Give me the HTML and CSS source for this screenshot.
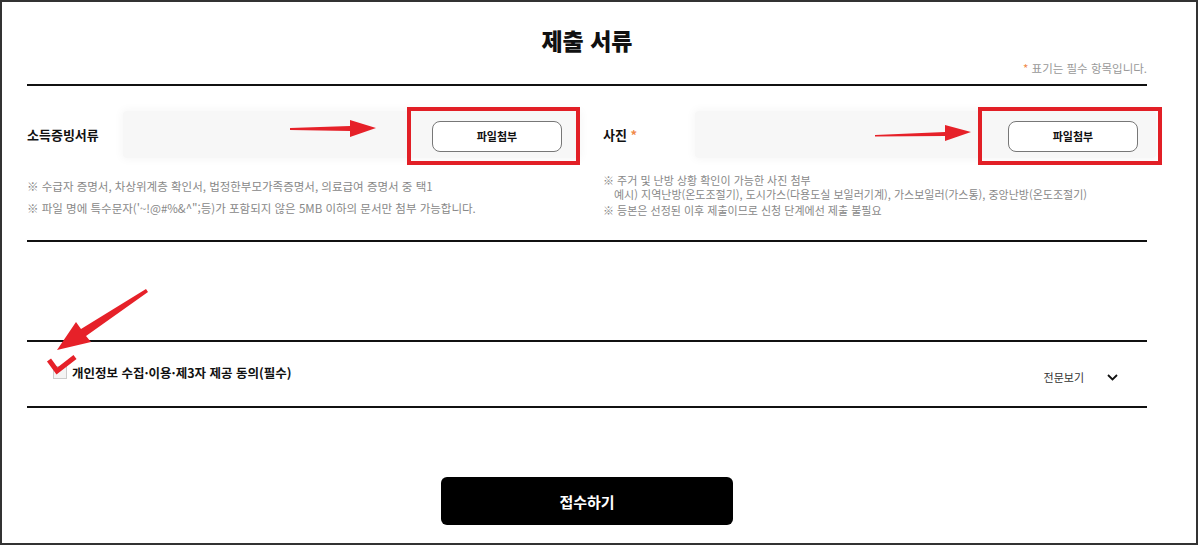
FILE: index.html
```html
<!DOCTYPE html>
<html lang="ko">
<head>
    <meta charset="UTF-8">
    <meta name="viewport" content="width=device-width, initial-scale=1.0">
    <title>제출 서류</title>
    <link rel="stylesheet" href="styles.css">
</head>
<body>
    <div class="frame">
        <div class="content">
            <div class="head">
                <h2 class="title">제출 서류</h2>
                <p class="req-note"><span class="star">*</span> 표기는 필수 항목입니다.</p>
            </div>

            <div class="docs">
                <div class="doc-col">
                    <div class="doc-row">
                        <span class="doc-label">소득증빙서류</span>
                        <div class="file-box">
                            <button class="file-btn">파일첨부</button>
                        </div>
                    </div>
                    <ul class="notes notes-left">
                        <li>※ 수급자 증명서, 차상위계층 확인서, 법정한부모가족증명서, 의료급여 증명서 중 택1</li>
                        <li>※ 파일 명에 특수문자('~!@#%&amp;^";등)가 포함되지 않은 5MB 이하의 문서만 첨부 가능합니다.</li>
                    </ul>
                </div>
                <div class="doc-col">
                    <div class="doc-row">
                        <span class="doc-label doc-label-short">사진 <span class="star">*</span></span>
                        <div class="file-box">
                            <button class="file-btn">파일첨부</button>
                        </div>
                    </div>
                    <ul class="notes notes-right">
                        <li>※ 주거 및 난방 상황 확인이 가능한 사진 첨부
                            <span class="note-sub">예시) 지역난방(온도조절기), 도시가스(다용도실 보일러기계), 가스보일러(가스통), 중앙난방(온도조절기)</span>
                        </li>
                        <li>※ 등본은 선정된 이후 제출이므로 신청 단계에선 제출 불필요</li>
                    </ul>
                </div>
            </div>

            <div class="agree">
                <label class="agree-check">
                    <span class="chk"></span>
                    개인정보 수집·이용·제3자 제공 동의(필수)
                </label>
                <div class="view-all">
                    전문보기
                    <svg class="chevron" width="11" height="7" viewBox="0 0 11 7">
                        <path d="M1 1 L5.5 5.5 L10 1" fill="none" stroke="#111" stroke-width="1.8"/>
                    </svg>
                </div>
            </div>

            <div class="submit-wrap">
                <button class="submit-btn">접수하기</button>
            </div>
        </div>

        <!-- red annotation marks drawn over the form -->
        <svg class="marks" width="1200" height="545" viewBox="0 0 1200 545">
            <rect x="409" y="109" width="169" height="54" fill="none" stroke="#e21f26" stroke-width="4"/>
            <rect x="980" y="109" width="180" height="54" fill="none" stroke="#e21f26" stroke-width="4"/>
            <polygon points="290,128 350,126 350,120 376,128 350,137 350,131 290,130" fill="#e62129"/>
            <polygon points="875,135 945,132 945,125 971,132 945,141 945,136 875,136.5" fill="#e62129"/>
            <polygon points="146,289 148,292 86,336 91,342 57,350 76,322 81,329" fill="#e62129"/>
            <polyline points="49,360 57,371 75,357" fill="none" stroke="#e62129" stroke-width="5"/>
        </svg>
    </div>
</body>
</html>
```

FILE: styles.css
```css
body {
    margin: 0;
    font-family: "Noto Sans CJK KR", "Noto Sans", sans-serif;
    color: #111;
    background: #fff;
}
.frame {
    position: relative;
    width: 1198px;
    height: 545px;
    border: 2px solid #333;
    box-sizing: border-box;
    background: #fff;
}
.content {
    margin-left: 25px;
    width: 1120px;
}
.head {
    height: 84px;
    box-sizing: border-box;
    border-bottom: 2px solid #111;
}
.title {
    margin: 0;
    padding-top: 18px;
    line-height: 40px;
    font-size: 23px;
    font-weight: 900;
    text-align: center;
}
.req-note {
    margin: 0;
    text-align: right;
    font-size: 11.5px;
    line-height: 16px;
    color: #999;
}
.star {
    color: #f08a4b;
}
.docs {
    display: flex;
    gap: 23px;
    height: 156px;
    padding-top: 25px;
    box-sizing: border-box;
    border-bottom: 2px solid #111;
}
.doc-col {
    flex: none;
    width: 553px;
}
.doc-row {
    display: flex;
    align-items: center;
    height: 47px;
}
.doc-label {
    flex: none;
    width: 96px;
    font-size: 13px;
    font-weight: 700;
}
.doc-label-short {
    width: 92px;
}
.file-box {
    flex: 1;
    height: 47px;
    display: flex;
    align-items: center;
    justify-content: flex-end;
    padding: 3px 18px 0 0;
    box-sizing: border-box;
    background: #f7f7f7;
    border-radius: 4px;
    box-shadow: 0 0 8px 2px #f7f7f7;
}
.file-btn {
    width: 130px;
    height: 31px;
    background: #fff;
    border: 1px solid #777;
    border-radius: 8px;
    font-family: inherit;
    font-size: 11px;
    font-weight: 700;
    color: #111;
}
.notes {
    list-style: none;
    margin: 0;
    padding: 0;
    font-size: 11px;
    color: #888;
}
.notes-left {
    margin-top: 17px;
    font-size: 11.5px;
    line-height: 22px;
}
.notes-right {
    margin-top: 15px;
    line-height: 14px;
}
.notes-right li + li {
    margin-top: 2px;
}
.note-sub {
    display: block;
    padding-left: 11px;
}
.agree {
    display: flex;
    align-items: center;
    justify-content: space-between;
    height: 68px;
    margin-top: 98px;
    padding: 0 29px 0 26px;
    box-sizing: border-box;
    border-top: 2px solid #111;
    border-bottom: 2px solid #111;
}
.agree-check {
    display: flex;
    align-items: center;
    margin-top: -3px;
    font-size: 12.5px;
    font-weight: 700;
}
.chk {
    width: 12px;
    height: 11px;
    margin-right: 5px;
    border: 1px solid #ccc;
    background: #f4f4f4;
}
.view-all {
    display: flex;
    align-items: center;
    margin-top: 6px;
    font-size: 11px;
    color: #333;
}
.chevron {
    margin-left: 23px;
}
.submit-wrap {
    display: flex;
    justify-content: center;
    margin-top: 69px;
}
.submit-btn {
    width: 292px;
    height: 48px;
    background: #000;
    border: none;
    border-radius: 6px;
    font-family: inherit;
    font-size: 15px;
    font-weight: 700;
    color: #fff;
}
.marks {
    position: absolute;
    left: -2px;
    top: -2px;
    pointer-events: none;
}
```
